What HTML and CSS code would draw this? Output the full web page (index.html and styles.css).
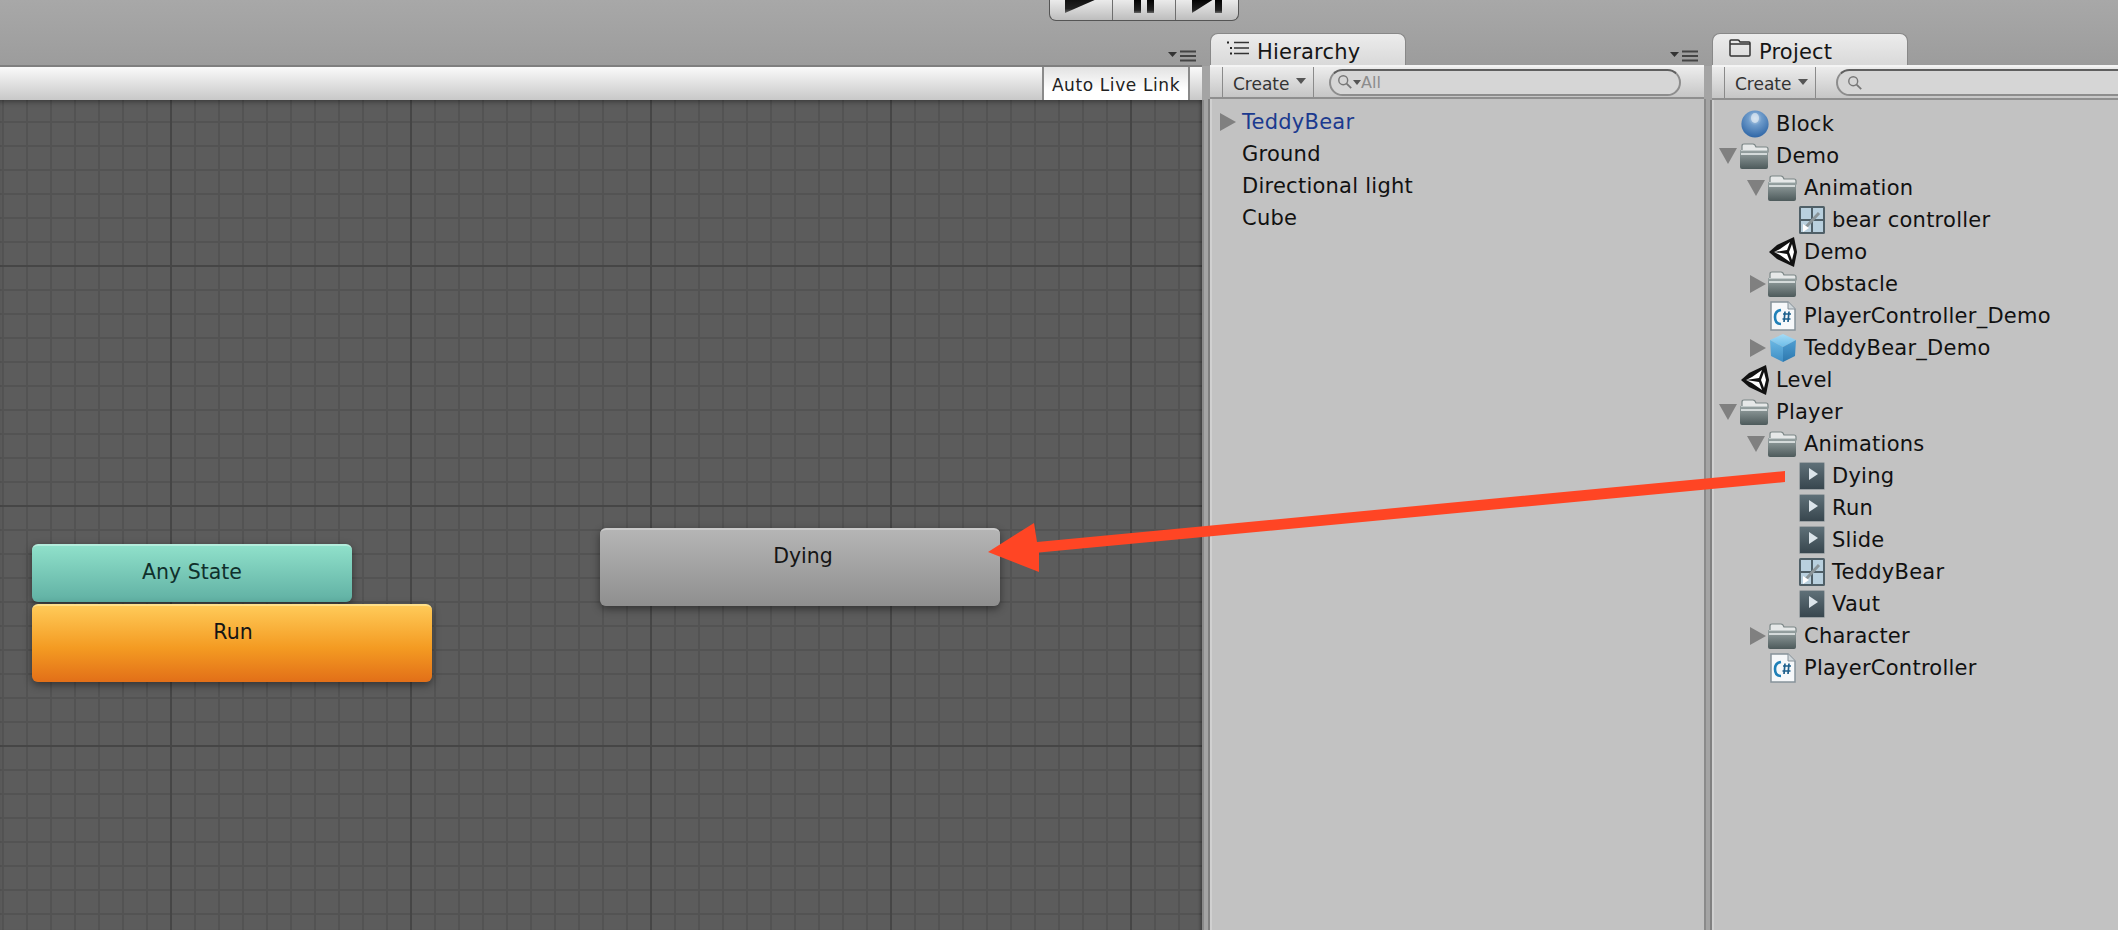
FILE: index.html
```html
<!DOCTYPE html>
<html lang="en">
<head>
<meta charset="utf-8">
<title>Animator</title>
<link rel="stylesheet" href="styles.css">
</head>
<body>
<svg class="defs" width="0" height="0" aria-hidden="true">
  <defs>
    <linearGradient id="gFolder" x1="0" y1="0" x2="0" y2="1"><stop offset="0" stop-color="#9aa5a5"/><stop offset="1" stop-color="#4d5a5b"/></linearGradient>
    <linearGradient id="gClip" x1="0" y1="0" x2="0" y2="1"><stop offset="0" stop-color="#5f7078"/><stop offset="1" stop-color="#38464e"/></linearGradient>
    <radialGradient id="gSphere" cx=".5" cy=".3" r=".7"><stop offset="0" stop-color="#cfe0ee"/><stop offset=".35" stop-color="#6f9ccb"/><stop offset="1" stop-color="#2f66a6"/></radialGradient>
    <linearGradient id="gCubeT" x1="0" y1="0" x2="0" y2="1"><stop offset="0" stop-color="#a6dcf6"/><stop offset="1" stop-color="#6cbce8"/></linearGradient>
    <linearGradient id="gCubeL" x1="0" y1="0" x2="0" y2="1"><stop offset="0" stop-color="#6ab8e4"/><stop offset="1" stop-color="#3f8ec4"/></linearGradient>
    <linearGradient id="gCubeR" x1="0" y1="0" x2="0" y2="1"><stop offset="0" stop-color="#4e9ed2"/><stop offset="1" stop-color="#2d78ae"/></linearGradient>
    <linearGradient id="gTransport" x1="0" y1="0" x2="0" y2="1"><stop offset="0" stop-color="#000"/><stop offset=".8" stop-color="#222"/><stop offset="1" stop-color="#666"/></linearGradient>

    <symbol id="i-folder" viewBox="0 0 30 28">
      <path d="M3 7 V4 Q3 2 5 2 H14 Q16 2 17 5 H27 Q29 5 29 7 V10 H3Z" fill="#e6e8e8" stroke="#7b8686" stroke-width="1.2"/>
      <path d="M1 8 H29 V25 Q29 27 27 27 H3 Q1 27 1 25Z" fill="url(#gFolder)"/>
      <rect x="2" y="11" width="26" height="2" fill="#d4dada"/>
      <rect x="2" y="8" width="26" height="1" fill="#c2caca"/>
    </symbol>
    <symbol id="i-sphere" viewBox="0 0 28 28">
      <circle cx="14" cy="14" r="13.6" fill="url(#gSphere)"/>
      <ellipse cx="14" cy="8" rx="4" ry="5" fill="#dbe7f1" opacity=".75"/>
    </symbol>
    <symbol id="i-clip" viewBox="0 0 26 28">
      <rect x="0" y="0" width="26" height="28" rx="1.5" fill="#9aa0a3"/>
      <rect x="1" y="1" width="24" height="26" fill="url(#gClip)"/>
      <path d="M10 6 L19 12 L10 18Z" fill="#dbe4ea"/>
    </symbol>
    <symbol id="i-ctrl" viewBox="0 0 26 28">
      <rect x="0" y="0" width="26" height="28" rx="1.5" fill="#4f5f67"/>
      <rect x="2" y="2" width="10" height="11" fill="#b9d0de"/>
      <rect x="14" y="2" width="10" height="11" fill="#b9d0de"/>
      <rect x="2" y="15" width="10" height="11" fill="#b9d0de"/>
      <rect x="14" y="15" width="10" height="11" fill="#b9d0de"/>
      <path d="M7 21 L20 7" stroke="#8a9498" stroke-width="3"/>
      <path d="M4 18 L10 22 L4 26Z" fill="#fff"/>
    </symbol>
    <symbol id="i-unity" viewBox="0 0 28 30">
      <path d="M0 15 L8 8 L25 0 L28 15 L25 30 L8 22Z" fill="#111"/>
      <path d="M5 15 L11 12 L21 5 L18 13Z" fill="#fff"/>
      <path d="M5 15 L11 18 L21 25 L18 17Z" fill="#fff"/>
      <path d="M20 15 L23 7 L25 15 L23 23Z" fill="#fff"/>
    </symbol>
    <symbol id="i-cs" viewBox="0 0 26 30">
      <path d="M1 1 H18 L25 8 V29 H1Z" fill="#f6f8fa" stroke="#87929a" stroke-width="1.5"/>
      <path d="M18 1 V8 H25" fill="#cfd6da" stroke="#87929a" stroke-width="1"/>
      <path d="M11 9 Q5 10 5 16 Q5 23 11 23" fill="none" stroke="#1f80b8" stroke-width="2.6"/>
      <path d="M13 13 H21 M12.5 18 H20.5 M15 10.5 L14 21 M19 10.5 L18 21" stroke="#1d5f8c" stroke-width="1.7" fill="none"/>
    </symbol>
    <symbol id="i-cube" viewBox="0 0 28 30">
      <path d="M14 1 L27 7 L14 14 L1 7Z" fill="url(#gCubeT)"/>
      <path d="M1 7 L14 14 V29 L2 23Z" fill="url(#gCubeL)"/>
      <path d="M27 7 L14 14 V29 L26 23Z" fill="url(#gCubeR)"/>
    </symbol>
    <symbol id="i-menu" viewBox="0 0 28 12">
      <path d="M0 2 H9 L4.5 7Z" fill="#333"/>
      <path d="M12 1.5 H28 M12 6 H28 M12 10.5 H28" stroke="#444" stroke-width="2"/>
    </symbol>
    <symbol id="i-lens" viewBox="0 0 18 18">
      <circle cx="7" cy="7" r="5" fill="none" stroke="#777" stroke-width="1.6"/>
      <path d="M10.5 10.5 L16 16" stroke="#777" stroke-width="2"/>
    </symbol>
  </defs>
</svg>

<div class="app">
  <header class="topbar">
    <div class="transport">
      <div class="tbtn"><svg width="32" height="14" viewBox="0 0 32 14"><path d="M0 -8 L32 0 L0 14Z" fill="url(#gTransport)"/></svg></div>
      <div class="tbtn"><svg width="20" height="14" viewBox="0 0 20 14"><path d="M0 0 H7 V14 H0Z M13 0 H20 V14 H13Z" fill="url(#gTransport)"/></svg></div>
      <div class="tbtn"><svg width="30" height="14" viewBox="0 0 30 14"><path d="M0 0 H22 V0 L0 14Z M23 0 H30 V14 H23Z" fill="url(#gTransport)"/></svg></div>
    </div>
  </header>

  <main class="dock">
    <section class="panel panel-animator">
      <div class="tabstrip"><svg class="menu"><use href="#i-menu"/></svg></div>
      <div class="toolbar toolbar-animator">
        <div class="livelink">Auto Live Link</div>
      </div>
      <div class="graph">
        <div class="node node-any">Any State</div>
        <div class="node node-run">Run</div>
        <div class="node node-dying">Dying</div>
      </div>
    </section>

    <section class="panel panel-hierarchy">
      <div class="tabstrip">
        <div class="tab">
          <svg class="tab-icon" viewBox="0 0 22 14"><path d="M0 1.5 H2 M3 7 H5 M3 12.5 H5" stroke="#222" stroke-width="2"/><path d="M7 1.5 H22 M7 7 H22 M7 12.5 H22" stroke="#333" stroke-width="1.6"/></svg>
          <span>Hierarchy</span>
        </div>
        <svg class="menu"><use href="#i-menu"/></svg>
      </div>
      <div class="toolbar">
        <div class="create"><span>Create</span><i class="caret"></i></div>
        <div class="search"><svg class="lens"><use href="#i-lens"/></svg><i class="caret caret-sm"></i><span class="search-hint">All</span></div>
      </div>
      <ul class="tree tree-hierarchy">
        <li class="row"><i class="arrow arrow-r"></i><span class="selected">TeddyBear</span></li>
        <li class="row"><i class="arrow"></i><span>Ground</span></li>
        <li class="row"><i class="arrow"></i><span>Directional light</span></li>
        <li class="row"><i class="arrow"></i><span>Cube</span></li>
      </ul>
    </section>

    <section class="panel panel-project">
      <div class="tabstrip">
        <div class="tab">
          <svg class="tab-icon tab-icon-folder" viewBox="0 0 22 18"><path d="M1 5 V2 Q1 1 2 1 H9 Q10 1 11 3 H20 Q21 3 21 4 V16 Q21 17 20 17 H2 Q1 17 1 16Z M1 5 H21" fill="none" stroke="#333" stroke-width="1.5"/></svg>
          <span>Project</span>
        </div>
      </div>
      <div class="toolbar toolbar-project">
        <div class="create"><span>Create</span><i class="caret"></i></div>
        <div class="search search-wide"><svg class="lens"><use href="#i-lens"/></svg></div>
      </div>
      <ul class="tree tree-project">
        <li class="row d0"><i class="arrow"></i><svg class="ico ico-sphere"><use href="#i-sphere"/></svg><span>Block</span></li>
        <li class="row d0"><i class="arrow arrow-d"></i><svg class="ico"><use href="#i-folder"/></svg><span>Demo</span></li>
        <li class="row d1"><i class="arrow arrow-d"></i><svg class="ico"><use href="#i-folder"/></svg><span>Animation</span></li>
        <li class="row d2"><i class="arrow"></i><svg class="ico ico-asset"><use href="#i-ctrl"/></svg><span>bear controller</span></li>
        <li class="row d1"><i class="arrow"></i><svg class="ico ico-tall"><use href="#i-unity"/></svg><span>Demo</span></li>
        <li class="row d1"><i class="arrow arrow-r"></i><svg class="ico"><use href="#i-folder"/></svg><span>Obstacle</span></li>
        <li class="row d1"><i class="arrow"></i><svg class="ico ico-tall"><use href="#i-cs"/></svg><span>PlayerController_Demo</span></li>
        <li class="row d1"><i class="arrow arrow-r"></i><svg class="ico ico-tall"><use href="#i-cube"/></svg><span>TeddyBear_Demo</span></li>
        <li class="row d0"><i class="arrow"></i><svg class="ico ico-tall"><use href="#i-unity"/></svg><span>Level</span></li>
        <li class="row d0"><i class="arrow arrow-d"></i><svg class="ico"><use href="#i-folder"/></svg><span>Player</span></li>
        <li class="row d1"><i class="arrow arrow-d"></i><svg class="ico"><use href="#i-folder"/></svg><span>Animations</span></li>
        <li class="row d2"><i class="arrow"></i><svg class="ico ico-asset"><use href="#i-clip"/></svg><span>Dying</span></li>
        <li class="row d2"><i class="arrow"></i><svg class="ico ico-asset"><use href="#i-clip"/></svg><span>Run</span></li>
        <li class="row d2"><i class="arrow"></i><svg class="ico ico-asset"><use href="#i-clip"/></svg><span>Slide</span></li>
        <li class="row d2"><i class="arrow"></i><svg class="ico ico-asset"><use href="#i-ctrl"/></svg><span>TeddyBear</span></li>
        <li class="row d2"><i class="arrow"></i><svg class="ico ico-asset"><use href="#i-clip"/></svg><span>Vaut</span></li>
        <li class="row d1"><i class="arrow arrow-r"></i><svg class="ico"><use href="#i-folder"/></svg><span>Character</span></li>
        <li class="row d1"><i class="arrow"></i><svg class="ico ico-tall"><use href="#i-cs"/></svg><span>PlayerController</span></li>
      </ul>
    </section>
  </main>

  <svg class="annotation" width="2118" height="930" viewBox="0 0 2118 930" aria-hidden="true">
    <path d="M988 552 L1034 523 L1037 542 L1785 471 L1785 482 L1039 552.5 L1039 572Z" fill="#ff4524"/>
  </svg>
</div>
</body>
</html>
```

FILE: styles.css
```css
* { box-sizing: border-box; }
html, body { margin: 0; height: 100%; overflow: hidden; }
body {
  font-family: "DejaVu Sans", "Liberation Sans", sans-serif;
  color: #151515;
  background: #c2c2c2;
}
.defs { position: absolute; }
ul { list-style: none; margin: 0; padding: 0; }

.app {
  position: relative;
  width: 2118px;
  height: 930px;
  display: flex;
  flex-direction: column;
  overflow: hidden;
  background: linear-gradient(180deg, #a8a8a8 0, #9c9c9c 66px, #a4a4a4 66px, #a4a4a4 100%);
}

/* top transport */
.topbar { height: 33px; flex: none; padding-left: 1049px; }
.transport {
  width: 190px;
  height: 22px;
  margin-top: -1px;
  display: flex;
  border: 1px solid #555;
  border-top: 0;
  border-radius: 0 0 7px 7px;
  background: linear-gradient(180deg, #ededed, #bdbdbd);
  overflow: hidden;
}
.tbtn {
  flex: 1;
  display: flex;
  justify-content: center;
  align-items: flex-start;
  border-left: 1px solid #6e6e6e;
}
.tbtn:first-child { border-left: 0; }

/* dock */
.dock {
  flex: 1;
  min-height: 0;
  display: grid;
  grid-template-columns: 1202px 494px 406px;
  column-gap: 8px;
}
.panel { display: flex; flex-direction: column; min-width: 0; }

.tabstrip {
  height: 32px;
  flex: none;
  display: flex;
  align-items: flex-end;
  justify-content: space-between;
}
.panel-animator .tabstrip { justify-content: flex-end; }
.tab {
  width: 196px;
  height: 32px;
  display: flex;
  align-items: center;
  padding: 4px 0 0 16px;
  gap: 8px;
  font-size: 21px;
  letter-spacing: .2px;
  border: 1px solid #888;
  border-bottom: 0;
  border-radius: 8px 8px 0 0;
  background: linear-gradient(180deg, #ececec, #d9d9d9);
}
.tab-icon { width: 22px; height: 14px; flex: none; margin-top: -7px; }
.tab-icon-folder { height: 18px; }
.menu { width: 28px; height: 12px; margin: 0 6px 3px 0; flex: none; }

.toolbar {
  height: 34px;
  flex: none;
  display: flex;
  align-items: center;
  padding-left: 12px;
  border-top: 2px solid #f4f4f4;
  border-bottom: 2px solid #8f8f8f;
  background: linear-gradient(180deg, #ececec, #c6c6c6);
  font-size: 17px;
  color: #333;
}
.toolbar-project { height: 35px; }
.toolbar-animator {
  height: 35px;
  justify-content: flex-end;
  padding: 0 12px 0 0;
  border-top: 2px solid #7f7f7f;
  border-bottom: 0;
  background: linear-gradient(180deg, #fafafa, #c8c8c8);
  color: #222;
}
.livelink {
  width: 148px;
  height: 100%;
  display: flex;
  align-items: center;
  justify-content: center;
  padding-top: 2px;
  border-left: 2px solid #8a8a8a;
  border-right: 2px solid #8a8a8a;
  background: linear-gradient(180deg, #e2e2e2, #ffffff 70%);
  font-size: 17px;
  letter-spacing: .6px;
}

.create {
  width: 92px;
  height: 100%;
  flex: none;
  display: flex;
  align-items: center;
  padding: 3px 0 0 10px;
  gap: 6px;
  border-left: 1px solid #8a8a8a;
  border-right: 1px solid #8a8a8a;
}
.caret {
  width: 0;
  height: 0;
  margin-top: -5px;
  border-left: 5px solid transparent;
  border-right: 5px solid transparent;
  border-top: 6px solid #555;
}
.caret-sm { border-left-width: 4px; border-right-width: 4px; border-top-width: 5px; margin: 0; }

.search {
  width: 352px;
  height: 27px;
  margin-left: 15px;
  display: flex;
  align-items: center;
  padding-left: 6px;
  border: 2px solid #8d8d8d;
  border-top-color: #5f5f5f;
  border-radius: 14px;
  background: #d6d6d6;
  color: #8c8c8c;
}
.search-wide { width: 420px; flex: none; margin-left: 20px; padding-left: 9px; }
.lens { width: 16px; height: 16px; flex: none; }
.search-hint { font-size: 16px; }

/* graph */
.graph {
  position: relative;
  flex: 1;
  min-height: 0;
  background-color: #5c5c5c;
  background-image:
    linear-gradient(90deg, #464646 2px, transparent 2px),
    linear-gradient(180deg, #464646 2px, transparent 2px),
    linear-gradient(90deg, #535353 2px, transparent 2px),
    linear-gradient(180deg, #535353 2px, transparent 2px);
  background-size: 240px 240px, 240px 240px, 24px 24px, 24px 24px;
  background-position: 170px 0, 0 165px, 2px 0, 0 21px;
  box-shadow: inset 0 5px 5px -3px rgba(0, 0, 0, .35), inset -4px 0 3px -2px rgba(0, 0, 0, .25), 2px 0 0 #8a8a8a;
}
.node {
  position: absolute;
  text-align: center;
  font-size: 20.5px;
  line-height: 24px;
  border-radius: 6px;
  color: #151515;
  box-shadow: 0 3px 8px rgba(0, 0, 0, .45);
}
.node-any {
  left: 32px; top: 444px; width: 320px; height: 58px;
  padding-top: 14px;
  background: linear-gradient(180deg, #8fe0ca, #60b0a3);
  border-top: 2px solid #b4ecdc;
  color: #10302c;
}
.node-run {
  left: 32px; top: 504px; width: 400px; height: 78px;
  padding: 14px 0 0 2px;
  background: linear-gradient(180deg, #ffca58, #f49b22 55%, #e26f18);
  border-top: 2px solid #ffe08a;
}
.node-dying {
  left: 600px; top: 428px; width: 400px; height: 78px;
  padding: 14px 0 0 6px;
  background: linear-gradient(180deg, #b5b5b5, #8f8f8f);
  border-top: 2px solid #cbcbcb;
}

/* tree */
.tree {
  flex: 1;
  background: #c2c2c2;
  border-left: 2px solid #d0d0d0;
  box-shadow: -2px 0 0 #808080, 2px 0 0 #8a8a8a;
  font-size: 21px;
  letter-spacing: .25px;
  color: #111;
}
.tree-hierarchy { padding: 7px 0 0 8px; }
.tree-project { padding: 8px 0 0 5px; }
.row {
  height: 32px;
  display: flex;
  align-items: center;
  white-space: nowrap;
}
.arrow { width: 22px; flex: none; height: 18px; position: relative; }
.arrow-r::before, .arrow-d::before { content: ""; position: absolute; width: 0; height: 0; }
.arrow-r::before {
  left: 0; top: 0;
  border-top: 9px solid transparent;
  border-bottom: 9px solid transparent;
  border-left: 16px solid #808080;
}
.arrow-d::before {
  left: 0; top: 1px;
  border-left: 9px solid transparent;
  border-right: 9px solid transparent;
  border-top: 16px solid #808080;
}
.selected { color: #1b3a8f; }

.tree-project .arrow { width: 20px; }
.tree-project .arrow-r::before { left: 3px; }
.d0 { padding-left: 0; }
.d1 { padding-left: 28px; }
.d2 { padding-left: 56px; }
.ico { width: 30px; height: 28px; margin-right: 7px; flex: none; }
.ico-sphere { width: 28px; margin-left: 2px; }
.ico-asset { width: 26px; margin-left: 4px; }
.ico-tall { width: 28px; height: 30px; margin-left: 2px; }

.annotation { position: absolute; left: 0; top: 0; pointer-events: none; }
```
